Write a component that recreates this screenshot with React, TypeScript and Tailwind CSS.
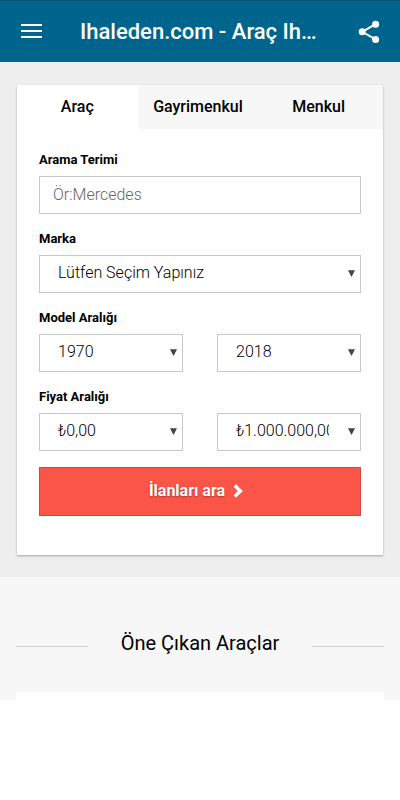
import { useState } from 'react';
import type { ReactNode } from 'react';
import clsx from 'clsx';

const tabs = ['Araç', 'Gayrimenkul', 'Menkul'];

type SelectProps = {
  id: string;
  label?: string;
  options: string[];
};

function Select({ id, label, options }: SelectProps) {
  return (
    <div className="relative min-w-0">
      <select
        id={id}
        aria-label={label}
        className="block h-[38px] w-full appearance-none border border-[#c8c8c8] bg-white pr-[31px] pb-[2px] pl-[18px] text-base font-light text-black"
      >
        {options.map((option) => (
          <option key={option}>{option}</option>
        ))}
      </select>
      <svg className="pointer-events-none absolute top-[15px] right-[6px] h-[7px] w-[7px]" viewBox="0 0 7 7" aria-hidden="true">
        <path d="M0 0.2h7L3.5 7z" fill="#444" />
      </svg>
    </div>
  );
}

function Field({ id, label, children }: { id: string; label: string; children: ReactNode }) {
  return (
    <div className="flex flex-col gap-2">
      <label htmlFor={id} className="text-[13px] leading-4 font-bold text-black">
        {label}
      </label>
      {children}
    </div>
  );
}

function Header() {
  return (
    <header className="flex h-[62px] items-center border-t border-[#0b5270] bg-[#00658d] px-5 text-white">
      <button type="button" aria-label="Menü" className="shrink-0">
        <svg className="h-[15px] w-[22px]" viewBox="0 0 22 15" aria-hidden="true">
          <path d="M1 1h21M1 7h21M1 13h21" stroke="#fff" strokeWidth="2" />
        </svg>
      </button>
      <h1 className="min-w-0 flex-1 truncate pl-[38px] text-[22px] leading-8 font-medium">Ihaleden.com - Araç Ih…</h1>
      <button type="button" aria-label="Paylaş" className="shrink-0">
        <svg className="h-6 w-[22px]" viewBox="0 0 22 24" aria-hidden="true">
          <path d="M17.6 4.2L4.2 11.8l13.4 7.6" fill="none" stroke="#fff" strokeWidth="2" />
          <circle cx="17.6" cy="4.2" r="3.5" fill="#fff" />
          <circle cx="4.2" cy="11.8" r="3.5" fill="#fff" />
          <circle cx="17.6" cy="19.4" r="3.5" fill="#fff" />
        </svg>
      </button>
    </header>
  );
}

export default function App() {
  const [activeTab, setActiveTab] = useState('Araç');

  return (
    <div className="bg-white font-['Roboto',sans-serif] text-black">
      <Header />

      <main>
        {/* Search */}
        <section className="bg-[#eeeeee] px-[17px] pt-[23px] pb-[22px]">
          <div className="bg-white shadow-[0_1px_2px_rgba(0,0,0,0.3)]">
            <div role="tablist" className="grid grid-cols-3 bg-[#f7f7f7] pr-1">
              {tabs.map((tab) => (
                <button
                  key={tab}
                  type="button"
                  role="tab"
                  aria-selected={activeTab === tab}
                  onClick={() => setActiveTab(tab)}
                  className={clsx('h-11 text-base font-medium', activeTab === tab ? 'bg-white' : 'bg-[#f7f7f7]')}
                >
                  {tab}
                </button>
              ))}
            </div>

            <form className="px-[22px] pt-[23px] pb-[39px]" onSubmit={(e) => e.preventDefault()}>
              <div className="flex flex-col gap-[17px]">
                <Field id="term" label="Arama Terimi">
                  <input
                    id="term"
                    type="text"
                    placeholder="Ör:Mercedes"
                    className="h-[38px] w-full border border-[#c8c8c8] px-[13px] pb-[2px] text-base font-light placeholder:text-[#666]"
                  />
                </Field>
                <Field id="brand" label="Marka">
                  <Select id="brand" options={['Lütfen Seçim Yapınız']} />
                </Field>
                <Field id="year-min" label="Model Aralığı">
                  <div className="grid grid-cols-2 gap-[34px]">
                    <Select id="year-min" options={['1970']} />
                    <Select id="year-max" label="En yüksek model" options={['2018']} />
                  </div>
                </Field>
                <Field id="price-min" label="Fiyat Aralığı">
                  <div className="grid grid-cols-2 gap-[34px]">
                    <Select id="price-min" options={['₺0,00']} />
                    <Select id="price-max" label="En yüksek fiyat" options={['₺1.000.000,00']} />
                  </div>
                </Field>
              </div>
              <button
                type="submit"
                className="mt-4 flex h-[49px] w-full items-center justify-center gap-2 border border-[#d2483c] bg-[#fb5547] pr-2 pb-[2px] text-base font-bold text-white [text-shadow:0_1px_2px_rgba(0,0,0,0.35)]"
              >
                İlanları ara
                <svg className="h-[14px] w-[10px]" viewBox="0 0 10 14" aria-hidden="true">
                  <path d="M0.6 2.6L3 0.2 9.8 7 3 13.8 0.6 11.4 4.6 7z" fill="#fff" />
                </svg>
              </button>
            </form>
          </div>
        </section>

        {/* Featured vehicles */}
        <section className="bg-[#f7f7f7] px-4 pt-[50px]">
          <div className="flex items-center gap-[33px]">
            <span className="mt-[6px] h-px flex-1 bg-[#d2d2d2]" />
            <h2 className="text-xl leading-8 font-normal">Öne Çıkan Araçlar</h2>
            <span className="mt-[6px] h-px flex-1 bg-[#d2d2d2]" />
          </div>
          <div className="mt-[33px] h-2 bg-white" />
        </section>
      </main>
    </div>
  );
}
